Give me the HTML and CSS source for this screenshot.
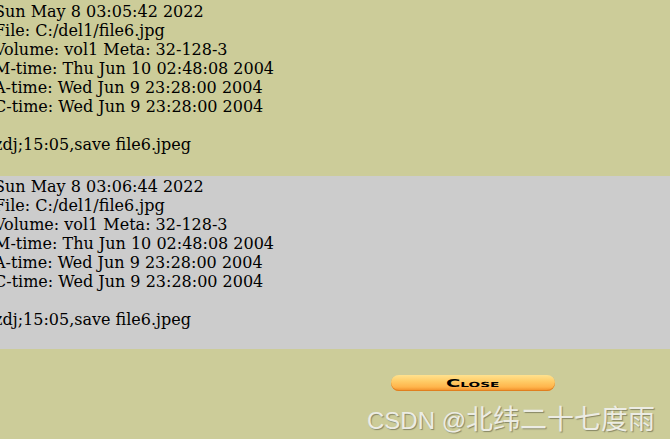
FILE: index.html
```html
<!DOCTYPE html>
<html lang="en">
<head>
	<meta charset="UTF-8">
	<title>file log</title>
	<link rel="stylesheet" href="styles.css">
</head>
<body>
	<div id="log">
		<div class="entry first">Sun May 8 03:05:42 2022
File: C:/del1/file6.jpg
Volume: vol1 Meta: 32-128-3
M-time: Thu Jun 10 02:48:08 2004
A-time: Wed Jun 9 23:28:00 2004
C-time: Wed Jun 9 23:28:00 2004

zdj;15:05,save file6.jpeg</div>
		<div class="entry alt">Sun May 8 03:06:44 2022
File: C:/del1/file6.jpg
Volume: vol1 Meta: 32-128-3
M-time: Thu Jun 10 02:48:08 2004
A-time: Wed Jun 9 23:28:00 2004
C-time: Wed Jun 9 23:28:00 2004

zdj;15:05,save file6.jpeg</div>
	</div>

	<div id="actions">
		<a href="javascript:;" class="close-btn"><span>Close</span></a>
	</div>

	<div class="watermark">CSDN @<span class="cjk">北纬二十七度雨</span></div>
</body>
</html>
```

FILE: styles.css
```css
html, body {
	margin: 0;
	padding: 0;
}
body {
	background: #cccc99;
	font-family: "DejaVu Serif", serif;
	font-size: 16px;
	color: #000;
	height: 439px;
	overflow: hidden;
	position: relative;
}
#log {
	margin-left: -6px;
}
.entry {
	white-space: pre-line;
	line-height: 19px;
	box-sizing: border-box;
	padding-top: 1px;
	height: 173px;
}
.entry.first {
	padding-top: 2px;
	height: 176px;
}
.entry.alt {
	background: #cccccc;
}
#actions {
	padding: 26px 0 0 391px;
}
.close-btn {
	display: flex;
	justify-content: center;
	align-items: center;
	width: 164px;
	height: 16px;
	border-radius: 8px;
	background: linear-gradient(#ffe28e, #ffcb66 40%, #ffb54c 75%, #f08a26);
	box-shadow: inset 0 -1px 0 #e07f1f;
	text-decoration: none;
	color: #000;
}
.close-btn span {
	display: inline-block;
	font-family: "DejaVu Sans", sans-serif;
	font-weight: bold;
	font-size: 10px;
	font-variant: small-caps;
	line-height: 10px;
	margin-top: 1px;
	transform: scaleX(1.95);
}
.watermark {
	position: absolute;
	left: 367px;
	top: 398px;
	font-family: "Liberation Sans", "Noto Sans CJK SC", sans-serif;
	font-size: 24px;
	color: #ecece4;
	text-shadow: 1px 1px 1px rgba(80, 80, 60, .55);
	white-space: nowrap;
}
.watermark .cjk {
	font-size: 27px;
}
```
